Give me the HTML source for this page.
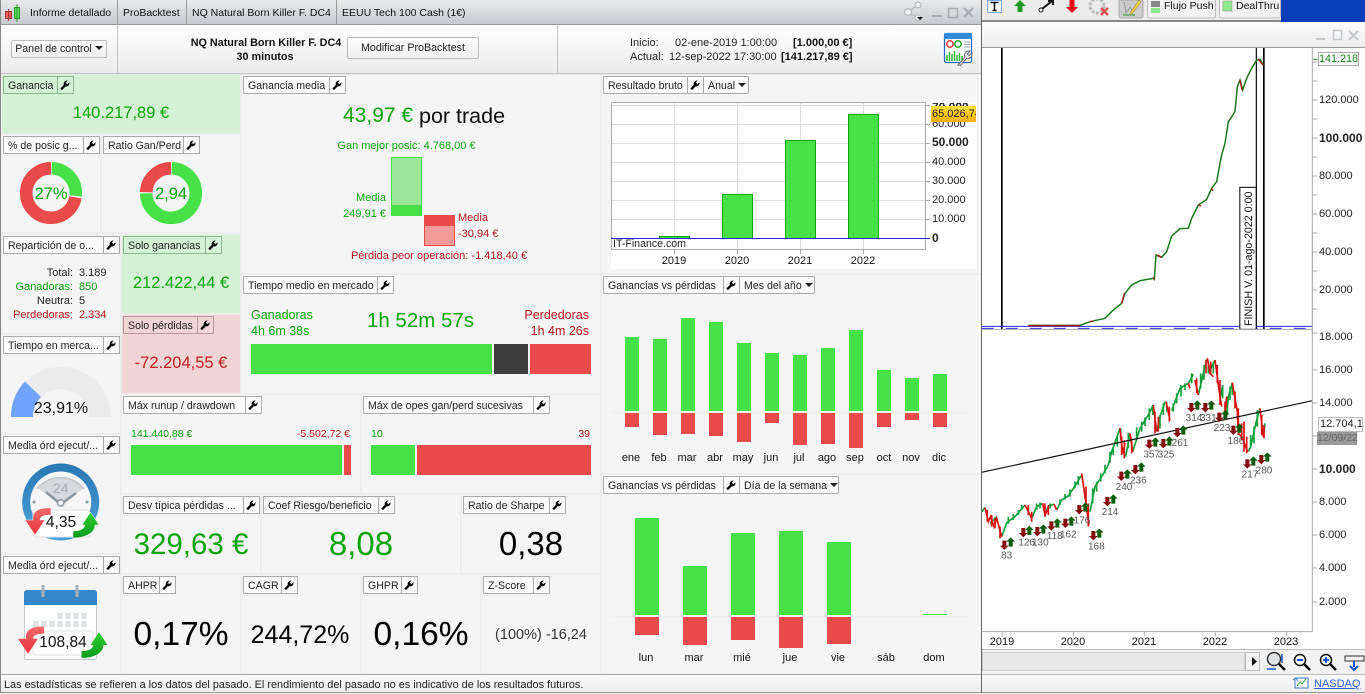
<!DOCTYPE html>
<html lang="es"><head><meta charset="utf-8"><title>Informe detallado</title>
<style>
html,body{margin:0;padding:0;width:1365px;height:694px;overflow:hidden;background:#ededed;font-family:"Liberation Sans",Arial,sans-serif;font-size:11px;color:#111}
.p{position:absolute;background:#f5f5f5}
.x{position:absolute;white-space:nowrap;line-height:16px}
.c{text-align:center}.rt{text-align:right}
.g{color:#0aa50a}.r{color:#b5161c}
.t{position:absolute;display:flex;height:18px;box-sizing:border-box;border:1px solid #aaa;background:#fafafa;font-size:10.6px;line-height:16px;color:#222;white-space:nowrap}
.t b{font-weight:normal;padding:1px 0 0 4px;border-right:1px solid #aaa;display:block;box-sizing:border-box;overflow:hidden}
.t i{display:block;width:15px;box-sizing:border-box}
.t i svg{display:block;margin:3px 0 0 2px;width:10px;height:10px}
.t u{text-decoration:none;display:block;border-left:1px solid #aaa;margin-left:0;padding:1px 0 0 4px;box-sizing:border-box}
.t u:after{content:"";display:inline-block;border:4px solid transparent;border-top-color:#222;border-bottom:0;margin-left:3px;vertical-align:2px}
.tg{background:transparent;border-color:#8fb58f}.tg b{border-color:#8fb58f}
.tr{background:transparent;border-color:#b59a9a}.tr b{border-color:#b59a9a}
.btn{position:absolute;box-sizing:border-box;border:1px solid #bbb;border-radius:2px;background:linear-gradient(#fdfdfd,#f0f0f0);text-align:center;color:#222}
.ax{position:absolute;left:1319px;line-height:14px;font-size:11px;color:#222;white-space:nowrap}
.yr{position:absolute;width:50px;text-align:center;font-size:11px;line-height:14px;color:#111}
.m{position:absolute;width:28px;text-align:center;font-size:11px;line-height:14px;color:#111}
.d{position:absolute;width:48px;text-align:center;font-size:11px;line-height:14px;color:#111}
.ya{position:absolute;left:932px;font-size:11px;line-height:14px;color:#222}
</style></head><body>

<!-- main window backgrounds -->
<div class="p" style="left:0;top:0;width:982px;height:25px;background:linear-gradient(#e9ebec,#c6cace);border-bottom:1px solid #999;box-sizing:border-box"></div>
<div class="p" style="left:0;top:25px;width:982px;height:49px;background:linear-gradient(#fff,#ececec);border-bottom:1px solid #c0c0c0;box-sizing:border-box"></div>
<div class="p" style="left:117px;top:0;width:1px;height:24px;background:#9a9a9a"></div>
<div class="p" style="left:186px;top:0;width:1px;height:24px;background:#9a9a9a"></div>
<div class="p" style="left:336px;top:0;width:1px;height:24px;background:#9a9a9a"></div>
<div class="p" style="left:117px;top:25px;width:1px;height:48px;background:#c4c4c4"></div>
<div class="p" style="left:557px;top:25px;width:1px;height:48px;background:#c4c4c4"></div>

<!-- panels -->
<div class="p" style="left:2px;top:75px;width:238px;height:58px;background:#d4f2d4"></div>
<div class="p" style="left:2px;top:135px;width:98px;height:97px"></div>
<div class="p" style="left:102px;top:135px;width:138px;height:97px"></div>
<div class="p" style="left:2px;top:235px;width:118px;height:98px"></div>
<div class="p" style="left:122px;top:235px;width:118px;height:78px;background:#d4f2d4"></div>
<div class="p" style="left:122px;top:315px;width:118px;height:78px;background:#f1d4d4"></div>
<div class="p" style="left:2px;top:335px;width:118px;height:98px"></div>
<div class="p" style="left:2px;top:435px;width:118px;height:118px"></div>
<div class="p" style="left:2px;top:555px;width:118px;height:118px"></div>
<div class="p" style="left:242px;top:75px;width:358px;height:198px"></div>
<div class="p" style="left:242px;top:275px;width:358px;height:118px"></div>
<div class="p" style="left:122px;top:395px;width:238px;height:98px"></div>
<div class="p" style="left:362px;top:395px;width:238px;height:98px"></div>
<div class="p" style="left:122px;top:495px;width:138px;height:78px"></div>
<div class="p" style="left:262px;top:495px;width:198px;height:78px"></div>
<div class="p" style="left:462px;top:495px;width:138px;height:78px"></div>
<div class="p" style="left:122px;top:575px;width:118px;height:98px"></div>
<div class="p" style="left:242px;top:575px;width:118px;height:98px"></div>
<div class="p" style="left:362px;top:575px;width:118px;height:98px"></div>
<div class="p" style="left:482px;top:575px;width:118px;height:98px"></div>
<div class="p" style="left:602px;top:75px;width:379px;height:198px"></div>
<div class="p" style="left:602px;top:275px;width:379px;height:198px"></div>
<div class="p" style="left:602px;top:475px;width:379px;height:198px"></div>
<div class="p" style="left:611px;top:102px;width:365px;height:167px;background:#fff"></div>

<!-- status bar -->
<div class="p" style="left:0;top:674px;width:982px;height:19px;background:linear-gradient(#fafafa,#ececec);border-top:1px solid #aaa;border-bottom:1px solid #999;box-sizing:border-box"></div>
<div class="x" style="left:4px;top:677px;color:#222;font-size:10.9px">Las estadísticas se refieren a los datos del pasado. El rendimiento del pasado no es indicativo de los resultados futuros.</div>

<!-- right window backgrounds -->
<div class="p" style="left:981px;top:0;width:384px;height:22px;background:#ececec;border-bottom:2px solid #888;box-sizing:border-box"></div>
<div class="p" style="left:1281px;top:0;width:84px;height:22px;background:#0a3eb8"></div>
<div class="p" style="left:981px;top:22px;width:384px;height:26px;background:linear-gradient(#fdfdfd,#ececec);border-bottom:1px solid #999;box-sizing:border-box"></div>
<div class="p" style="left:981px;top:48px;width:384px;height:601px;background:#fff"></div>
<div class="p" style="left:981px;top:649px;width:384px;height:26px;background:#f2f2f2;border-top:1px solid #bbb;border-bottom:1px solid #bbb;box-sizing:border-box"></div>
<div class="p" style="left:982px;top:652px;width:263px;height:19px;background:#e8e8e8;border:1px solid #ccc;box-sizing:border-box"></div>
<div class="p" style="left:1245px;top:652px;width:15px;height:19px;background:#f4f4f4;border:1px solid #bbb;box-sizing:border-box"></div>
<div class="p" style="left:981px;top:675px;width:384px;height:18px;background:linear-gradient(#fafafa,#eee);border-bottom:1px solid #999;box-sizing:border-box"></div>
<div class="p" style="left:981px;top:0;width:1px;height:693px;background:#666"></div>
<div class="p" style="left:0;top:0;width:1px;height:693px;background:#888"></div>

<!-- graphics layer -->
<svg width="1365" height="694" viewBox="0 0 1365 694" style="position:absolute;left:0;top:0" xmlns="http://www.w3.org/2000/svg">
<defs>
<path id="wr" d="M.6 8.2L3.800 5C3.200 3 4.600 .4 7.600 .5L5.800 2.600L7.400 4.200L9.500 2.300C9.800 5 7.800 6.800 5.700 6.200L2.400 9.700C1.600 10.200 .1 9 .6 8.200Z" fill="#000"/>
<path id="au" d="M0-15L13-2L6-2L6 13L-6 13L-6-2L-13-2Z" fill="#0a5c0a"/>
<path id="ad" d="M0 15L13 2L6 2L6-13L-6-13L-6 2L-13 2Z" fill="#860b0b"/>
<linearGradient id="ring" x1="0" y1="0" x2="0" y2="1"><stop offset="0" stop-color="#2a78b4"/><stop offset="1" stop-color="#4aa3df"/></linearGradient>
<linearGradient id="redA" x1="0" y1="0" x2="0" y2="1"><stop offset="0" stop-color="#f26a6a"/><stop offset="1" stop-color="#e8333a"/></linearGradient>
<linearGradient id="grnA" x1="0" y1="0" x2="0" y2="1"><stop offset="0" stop-color="#2fd02f"/><stop offset="1" stop-color="#0d9a1e"/></linearGradient>
</defs>

<!-- tab candle icon -->
<rect x="5.500" y="11.500" width="6" height="7" fill="#ee6060" stroke="#a33"/><path d="M8.500 9v12" stroke="#a33"/>
<rect x="14.500" y="7.500" width="5" height="11" fill="#5be05b" stroke="#2a9a2a"/><path d="M17 4v18" stroke="#2a9a2a"/>

<!-- share and window buttons -->
<g stroke="#b4b8bc" stroke-width="1.200" fill="#f3f3f3"><path d="M918 5L908 12L918 18" fill="none"/><circle cx="908" cy="12" r="3.400"/><circle cx="918" cy="5" r="3"/><circle cx="918" cy="18" r="3"/></g>
<path d="M917 17h6l-3 3z" fill="#111"/>
<path d="M932 16h10" stroke="#a8acb0" stroke-width="2"/><rect x="948.500" y="8.500" width="9" height="9" fill="none" stroke="#a8acb0" stroke-width="1.500"/><path d="M964 8l9 9M973 8l-9 9" stroke="#a8acb0" stroke-width="2"/>

<!-- right-top report icon -->
<rect x="944.500" y="33.500" width="27" height="29" rx="2" fill="#fff" stroke="#1a6cc0" stroke-width="1.200"/><rect x="944" y="33" width="28" height="6" rx="1" fill="#2f8bd8"/>
<circle cx="950" cy="44" r="3.200" fill="none" stroke="#d33" stroke-width="1.500"/><circle cx="958" cy="44" r="3.200" fill="none" stroke="#2a2" stroke-width="1.500"/><path d="M964 42h6M964 44.500h6M964 47h6" stroke="#9ab" stroke-width="1"/>
<path d="M947 61v-6M949.500 61v-9M952 61v-7M954.500 61v-10M957 61v-6M959.500 61v-8M962 61v-5" stroke="#2bb52b" stroke-width="1.500"/>
<path d="M958 65l7-8c-1.500-3 1-7 5-6l-2.500 3 1.500 1.500 3-2.500c.5 4-3 6.500-5.500 5.500l-6 7z" fill="#eee" stroke="#667"/>

<!-- donuts -->
<g fill="none" stroke-width="12.500">
<circle cx="51" cy="193" r="24.800" stroke="#e94a4a" stroke-dasharray="112.600 44.200" stroke-dashoffset="-43.200" transform="rotate(-90 51 193)"/>
<circle cx="51" cy="193" r="24.800" stroke="#47e047" stroke-dasharray="41 115.800" stroke-dashoffset="-.8" transform="rotate(-90 51 193)"/>
<circle cx="171" cy="193" r="24.800" stroke="#47e047" stroke-dasharray="115.600 41.200" stroke-dashoffset="-.8" transform="rotate(-90 171 193)"/>
<circle cx="171" cy="193" r="24.800" stroke="#e94a4a" stroke-dasharray="38.700 118.100" stroke-dashoffset="-117.500" transform="rotate(-90 171 193)"/>
</g>

<!-- gauge -->
<path d="M11 417A50 50 0 0 1 111 417L89 417A28 28 0 0 0 33 417Z" fill="#ececec"/>
<path d="M11 417A50 50 0 0 1 25 381.500L41 397A28 28 0 0 0 33 417Z" fill="#6fa3ff"/>

<!-- clock -->
<circle cx="60.700" cy="502" r="38.500" fill="url(#ring)"/><circle cx="60.700" cy="502" r="30.500" fill="#f6f6f6"/>
<path d="M38 488A30 30 0 0 1 84 488L68 500H54Z" fill="#d5dadd"/>
<path d="M37 489A30 30 0 0 1 84 489" fill="none" stroke="#bfc5c9" stroke-width="1.500"/>
<text x="60.700" y="493" text-anchor="middle" font-family="Liberation Sans" font-size="14" fill="#a4adb3">24</text>
<path d="M46 492L58 502M76 493L64 502" stroke="#8a969e" stroke-width="2.500"/><circle cx="60.700" cy="503" r="3.200" fill="#fff" stroke="#8a969e" stroke-width="1.500"/>
<circle cx="34" cy="502" r="1.500" fill="#8a969e"/><circle cx="87" cy="502" r="1.500" fill="#8a969e"/>
<rect x="33" y="510" width="57" height="27" rx="3" fill="#fff" stroke="#ddd"/>
<path d="M51 508C38 507 32 512 33 520L25 520L35 535L45 520L40 520C40 516 45 515 51 515Z" fill="url(#redA)" stroke="#fff" stroke-width=".5"/>
<path d="M73 531C80 531 84 529 85 525L82 525L90.500 512L99 525L95 525C95 533 85 538 73 538Z" fill="url(#grnA)" stroke="#fff" stroke-width=".5"/>

<!-- calendar -->
<rect x="24.500" y="590.500" width="72" height="69" rx="2" fill="#fff" stroke="#c2c8cc"/>
<path d="M24 605v-12a3 3 0 0 1 3-3h67a3 3 0 0 1 3 3v12z" fill="#3288c8"/>
<path d="M43 585v12M77 585v12" stroke="#a9b2b8" stroke-width="3"/>
<path d="M57.500 613h5v6h-5zM65.500 613h5v6h-5zM73.500 613h5v6h-5zM81.500 613h5v6h-5zM33.500 621h5v6h-5zM41.500 621h5v6h-5zM49.500 621h5v6h-5zM57.500 621h5v6h-5zM65.500 621h5v6h-5zM73.500 621h5v6h-5zM81.500 621h5v6h-5z" fill="#dce1e4"/>
<rect x="33" y="631" width="60" height="24" rx="3" fill="#fff" stroke="#ddd"/>
<g transform="translate(-7 118.700)"><path d="M51 508C38 507 32 512 33 520L25 520L35 535L45 520L40 520C40 516 45 515 51 515Z" fill="url(#redA)"/></g>
<g transform="translate(8.500 120)"><path d="M73 531C80 531 84 529 85 525L82 525L90.500 512L99 525L95 525C95 533 85 538 73 538Z" fill="url(#grnA)"/></g>

<!-- ganancia media bars -->
<rect x="391.500" y="157.500" width="30" height="58" fill="#9be89b" stroke="#4ce04c"/><rect x="391" y="205" width="31" height="11" fill="#47e047"/>
<rect x="424.500" y="215.500" width="30" height="30" fill="#f09a9a" stroke="#e94a4a"/><rect x="424" y="215" width="31" height="11" fill="#e94a4a"/>

<!-- resultado bruto chart -->
<g stroke="#dcdcdc" fill="none"><path d="M612 105.500H925M612 124.500H925M612 143.500H925M612 162.500H925M612 181.500H925M612 200.500H925M612 219.500H925M674.500 103V249M737.500 103V249M800.500 103V249M863.500 103V249"/></g>
<rect x="611.500" y="102.500" width="314" height="147" fill="none" stroke="#aaa"/>
<g fill="#47e047" stroke="#0aa50a"><rect x="659.500" y="236.500" width="30" height="2"/><rect x="722.500" y="194.500" width="30" height="44"/><rect x="785.500" y="140.500" width="30" height="98"/><rect x="848.500" y="114.500" width="30" height="124"/></g>
<path d="M611 238.500H930" stroke="#2424dd"/>
<path d="M926 105.500h4M926 124.500h4M926 143.500h4M926 162.500h4M926 181.500h4M926 200.500h4M926 219.500h4M674.500 250v4M737.500 250v4M800.500 250v4M863.500 250v4" stroke="#aaa"/>

<!-- tiempo / runup / opes bars -->
<rect x="251" y="344" width="241" height="30" fill="#47e047"/><rect x="494" y="344" width="34" height="30" fill="#3c3c3c"/><rect x="530" y="344" width="61" height="30" fill="#e94a4a"/>
<rect x="131" y="445" width="211" height="30" fill="#47e047"/><rect x="344" y="445" width="7" height="30" fill="#e94a4a"/>
<rect x="371" y="445" width="44" height="30" fill="#47e047"/><rect x="417" y="445" width="174" height="30" fill="#e94a4a"/>

<!-- months bars -->
<path d="M612 412.500H970M612 616.500H970" stroke="#eeeeee"/>
<g fill="#47e047"><rect x="625" y="337" width="14" height="74"/><rect x="653" y="339" width="14" height="72"/><rect x="681" y="318" width="14" height="93"/><rect x="709" y="322" width="14" height="89"/><rect x="737" y="343" width="14" height="68"/><rect x="765" y="353" width="14" height="58"/><rect x="793" y="355" width="14" height="56"/><rect x="821" y="348" width="14" height="63"/><rect x="849" y="330" width="14" height="81"/><rect x="877" y="370" width="14" height="41"/><rect x="905" y="378" width="14" height="33"/><rect x="933" y="374" width="14" height="37"/></g>
<g fill="#e94a4a"><rect x="625" y="413" width="14" height="14"/><rect x="653" y="413" width="14" height="22"/><rect x="681" y="413" width="14" height="21"/><rect x="709" y="413" width="14" height="23"/><rect x="737" y="413" width="14" height="29"/><rect x="765" y="413" width="14" height="10"/><rect x="793" y="413" width="14" height="32"/><rect x="821" y="413" width="14" height="31"/><rect x="849" y="413" width="14" height="35"/><rect x="877" y="413" width="14" height="14"/><rect x="905" y="413" width="14" height="7"/><rect x="933" y="413" width="14" height="14"/></g>

<!-- days bars -->
<g fill="#47e047"><rect x="635" y="518" width="24" height="97"/><rect x="683" y="566" width="24" height="49"/><rect x="731" y="533" width="24" height="82"/><rect x="779" y="531" width="24" height="84"/><rect x="827" y="542" width="24" height="73"/><rect x="923" y="614" width="24" height="1"/></g>
<g fill="#e94a4a"><rect x="635" y="617" width="24" height="18"/><rect x="683" y="617" width="24" height="28"/><rect x="731" y="617" width="24" height="23"/><rect x="779" y="617" width="24" height="31"/><rect x="827" y="617" width="24" height="27"/></g>

<!-- right window buttons -->
<path d="M1316 39h9" stroke="#c4c8cc" stroke-width="2"/><rect x="1333.500" y="30.500" width="8" height="9" fill="none" stroke="#c4c8cc" stroke-width="1.500"/><path d="M1349 31l9 9M1358 31l-9 9" stroke="#c4c8cc" stroke-width="2"/>

<!-- toolbar icons -->
<rect x="987.500" y=".5" width="14" height="12" fill="#fff" stroke="#7aa7e8"/><path d="M990.500 2.500h8M994.500 2.500v8M992.500 10.500h4" stroke="#111" stroke-width="1.600" fill="none"/>
<path d="M1020 0l6 6h-3.500v6h-5V6H1014z" fill="#1f9a1f"/>
<path d="M1042 9L1052 1M1048 1h5v4" stroke="#111" stroke-width="2" fill="none"/><circle cx="1041" cy="10" r="2" fill="#fff" stroke="#111"/>
<path d="M1072 13l6-6h-3.500V0h-5v7H1066z" fill="#e01010"/>
<circle cx="1097" cy="6" r="7" fill="none" stroke="#bbb" stroke-width="3" stroke-dasharray="3 1.500"/><path d="M1101 8l7 7M1108 8l-7 7" stroke="#e05050" stroke-width="2.500"/>
<rect x="1119" y="0" width="24" height="18" rx="2" fill="#ccc" stroke="#aaa"/><path d="M1124 2l2 11 4-6 3 5" fill="none" stroke="#999"/><path d="M1130 13l9-13 2 2-9 12z" fill="#f0d040" stroke="#8a7a20" stroke-width=".5"/><path d="M1123 15h12" stroke="#2a9a2a"/>
<rect x="1147.500" y="-1" width="68" height="19" rx="2" fill="#f2f2f2" stroke="#bbb"/><rect x="1151" y="1" width="9" height="6" fill="#888"/><rect x="1151" y="8" width="9" height="5" fill="#8ee88e"/>
<rect x="1219.500" y="-1" width="61" height="19" rx="2" fill="#f2f2f2" stroke="#bbb"/><rect x="1223" y="1" width="9" height="10" fill="#8ee88e" stroke="#888" stroke-width=".5"/>

<!-- right chart elements (scaled from 3x coordinates) -->
<g transform="translate(980 0) scale(.33333)">
 <g stroke="#000" fill="none"><path d="M65.500 144V988" stroke-width="5"/><path d="M829 144V988" stroke-width="3.500"/><path d="M851.500 144V988" stroke-width="5"/></g>
 <path d="M5 979H997" stroke="#2424dd" stroke-width="3"/>
 <path d="M5 985H997" stroke="#2424dd" stroke-width="3" stroke-dasharray="36 36"/>
 <path d="M145 976H300L330 965L375 955L400 930L425 910L435 880L455 855L480 842L520 835L523 838L528 765L545 772L560 755L575 708L600 686L625 685L635 655L655 615L680 598L695 565L710 545L720 490L725 465L735 430L745 365L765 335L772 260L780 240L788 270L800 235L815 205L830 180L840 178L850 195" fill="none" stroke="#197a19" stroke-width="4.500"/>
 <path d="M145 977H300M330 965l10-2M425 910l8-30M520 832l2 6M532 765l12 7M655 615l8 3M695 565l4 8M780 240l6 30M835 178l14 17" fill="none" stroke="#a51515" stroke-width="4"/>
 <rect x="779.500" y="562" width="49" height="426" fill="#fff" stroke="#000" stroke-width="3"/>
 <path d="M5 988H997" stroke="#aaa" stroke-width="3"/>
 <path d="M997 144V1005" stroke="#aaa" stroke-width="3"/>
 <path d="M997 186h15M997 243h15M997 300h15M997 357h15M997 414h15M997 471h15M997 528h15M997 585h15M997 642h15M997 699h15M997 756h15M997 813h15M997 870h15M997 927h15M997 999h15" stroke="#aaa" stroke-width="3"/>
 <path d="M1000 178h12" stroke="#197a19" stroke-width="3"/>
</g>
<text transform="translate(1252 326) rotate(-90)" font-family="Liberation Sans" font-size="10.700" fill="#111">FINISH V. 01-ago-2022 0:00</text>

<g transform="translate(980 340) scale(.33333)">
 <path d="M5 515L15 503M30 550L50 530M65 590L80 548L105 530L135 495M155 535L170 500L188 490M197 520L205 500L222 492M230 510L245 480L265 468L290 430L305 405M330 515L345 440L365 410L385 375L395 335L420 265M437 350L450 280M458 335L480 265L505 225L520 195M530 275L540 230L555 185M575 212L600 145L625 130L640 103M655 165L670 100L682 55M690 90L705 60M722 170L728 135M740 225L745 170L757 128M805 335L812 320L830 240L840 205M850 290L855 250" fill="none" stroke="#0fa03c" stroke-width="5"/>
 <path d="M85 552V530M100 540V522M115 525V510M125 510V495M170 510V490M180 505V488M210 505V490M240 495V478M255 478V462M270 470V448M285 445V425M295 435V408M338 490V445M350 455V425M362 425V400M375 400V375M390 368V335M400 345V325M412 320V285M422 300V265M445 325V278M470 295V262M485 275V245M495 258V232M508 240V205M518 225V195M540 265V225M550 225V190M560 215V185M580 215V190M590 190V160M603 170V135M615 150V130M635 130V100M662 145V100M672 120V75M685 100V65M700 100V65M728 175V135M742 225V170M750 180V140M757 165V128M812 325V285M822 310V260M832 260V210" fill="none" stroke="#0fa03c" stroke-width="5"/>
 <path d="M15 503L25 545L32 530L42 560L50 535L65 590M135 495L155 535M188 490L195 525L205 505M222 492L230 510M305 400L315 470L327 555M420 265L428 340L435 310M450 280L458 335M520 195L530 275M558 185L570 240M625 130L630 145M645 120L655 165M682 55L690 100L700 110M705 60L720 170L725 200M740 170L735 230M757 128L772 215L775 280L785 290L803 335M840 205L850 290" fill="none" stroke="#d81010" stroke-width="5"/>
 <path d="M22 545V510M35 560V525M45 565V535M60 595V560M145 525V495M155 545V515M195 530V490M205 525V495M318 510V440M325 560V490M425 345V290M433 355V300M455 340V295M525 280V215M535 275V230M568 245V200M650 160V115M678 100V60M692 105V65M712 130V75M720 195V120M735 235V185M765 205V155M775 285V205M785 300V250M792 335V245M800 340V290M845 285V225M852 295V255" fill="none" stroke="#d81010" stroke-width="5"/>
 <path d="M5 397L997 182" stroke="#111" stroke-width="3.500"/>
 <g>
 <use href="#ad" x="73" y="615"/><use href="#au" x="92" y="607"/><use href="#ad" x="130" y="577"/><use href="#au" x="148" y="572"/><use href="#ad" x="172" y="574"/><use href="#au" x="190" y="568"/><use href="#ad" x="214" y="557"/><use href="#au" x="232" y="550"/><use href="#ad" x="256" y="549"/><use href="#au" x="274" y="544"/><use href="#ad" x="298" y="508"/><use href="#au" x="316" y="502"/><use href="#ad" x="340" y="586"/><use href="#au" x="358" y="580"/><use href="#ad" x="382" y="484"/><use href="#au" x="400" y="478"/><use href="#ad" x="424" y="408"/><use href="#au" x="442" y="403"/><use href="#ad" x="466" y="388"/><use href="#au" x="484" y="382"/><use href="#ad" x="508" y="312"/><use href="#au" x="526" y="307"/><use href="#ad" x="550" y="310"/><use href="#au" x="568" y="304"/><use href="#ad" x="592" y="277"/><use href="#au" x="610" y="271"/><use href="#ad" x="634" y="202"/><use href="#au" x="652" y="196"/><use href="#ad" x="676" y="202"/><use href="#au" x="694" y="196"/><use href="#ad" x="718" y="231"/><use href="#au" x="736" y="225"/><use href="#ad" x="760" y="270"/><use href="#au" x="778" y="265"/><use href="#ad" x="802" y="371"/><use href="#au" x="820" y="364"/><use href="#ad" x="844" y="358"/><use href="#au" x="862" y="352"/>
 </g>
 <g font-family="Liberation Sans" font-size="30" fill="#555" text-anchor="middle">
 <text x="80" y="655">83</text><text x="140" y="617">126</text><text x="181" y="617">130</text><text x="224" y="597">118</text><text x="265" y="592">162</text><text x="306" y="550">176</text><text x="349" y="628">168</text><text x="390" y="525">214</text><text x="432" y="450">240</text><text x="475" y="430">236</text><text x="515" y="353">357</text><text x="558" y="353">325</text><text x="600" y="318">261</text><text x="642" y="243">314</text><text x="685" y="243">331</text><text x="726" y="273">223</text><text x="768" y="312">186</text><text x="810" y="412">217</text><text x="852" y="400">280</text>
 </g>
 <path d="M5 875H997M997 -340V875" stroke="#aaa" stroke-width="3" fill="none"/>
 <path d="M67 875v14M280 875v14M493 875v14M706 875v14M919 875v14" stroke="#aaa" stroke-width="3"/>
 <path d="M997 90h15M997 189h15M997 288h15M997 387h15M997 486h15M997 585h15M997 684h15M997 786h15" stroke="#aaa" stroke-width="3"/>
</g>

<!-- bottom right controls -->
<path d="M1252 657l5 4.500-5 4.500z" fill="#111"/>
<circle cx="1274" cy="659" r="6.500" fill="#dfe3e6" stroke="#333" stroke-width="1.500"/><path d="M1279 664l6 6" stroke="#111" stroke-width="2.500"/><path d="M1267 669h9M1282 654v9" stroke="#1450d8" stroke-width="1.500"/>
<circle cx="1300" cy="660" r="5.500" fill="#fff" stroke="#111" stroke-width="1.500"/><path d="M1297 660h6" stroke="#1450d8" stroke-width="2"/><path d="M1304 664l6 6" stroke="#111" stroke-width="2.500"/>
<circle cx="1326" cy="660" r="5.500" fill="#fff" stroke="#111" stroke-width="1.500"/><path d="M1323 660h6M1326 657v6" stroke="#1450d8" stroke-width="2"/><path d="M1330 664l6 6" stroke="#111" stroke-width="2.500"/>
<rect x="1345" y="656" width="19" height="5" fill="#eee" stroke="#333"/><path d="M1354 661v6M1350 666l4 4 4-4" stroke="#1450d8" stroke-width="2" fill="none"/>
<rect x="1295" y="678" width="13" height="10" fill="#fff" stroke="#3878c8"/><path d="M1297 686l3-4 2 2 4-5" stroke="#2a9a2a" fill="none"/><path d="M1293 680l3-2 2 3" stroke="#3878c8" fill="none"/>
</svg>

<!-- tabs text -->
<div class="x" style="left:30px;top:5px;font-size:10.500px">Informe detallado</div>
<div class="x" style="left:123px;top:5px;font-size:10.500px">ProBacktest</div>
<div class="x" style="left:192px;top:5px;font-size:10.500px">NQ Natural Born Killer F. DC4</div>
<div class="x" style="left:342px;top:5px;font-size:10.500px">EEUU Tech 100 Cash (1€)</div>

<!-- header -->
<div class="btn" style="left:11px;top:40px;width:96px;height:18px;line-height:17px;font-size:10.600px">Panel de control<span style="display:inline-block;border:4px solid transparent;border-top-color:#222;border-bottom:0;margin-left:3px;vertical-align:2px"></span></div>
<div class="x c" style="left:181px;top:35px;width:170px;font-weight:bold;font-size:10.800px">NQ Natural Born Killer F. DC4</div>
<div class="x c" style="left:180px;top:49px;width:170px;font-weight:bold;font-size:10.800px">30 minutos</div>
<div class="btn" style="left:347px;top:37px;width:132px;height:22px;line-height:20px;font-size:10.700px">Modificar ProBacktest</div>
<div class="x" style="left:630px;top:35px;color:#222">Inicio:</div>
<div class="x" style="left:675px;top:35px;color:#222">02-ene-2019 1:00:00</div>
<div class="x" style="left:793px;top:35px;font-weight:bold">[1.000,00 €]</div>
<div class="x" style="left:630px;top:49px;color:#222">Actual:</div>
<div class="x" style="left:669px;top:49px;color:#222">12-sep-2022 17:30:00</div>
<div class="x" style="left:781px;top:49px;font-weight:bold">[141.217,89 €]</div>

<!-- tags -->
<div class="t tg" style="left:3px;top:76px"><b style="width:54px">Ganancia</b><i><svg viewBox="0 0 10 10"><use href="#wr"/></svg></i></div>
<div class="t" style="left:3px;top:136px"><b style="width:80px">% de posic g...</b><i><svg viewBox="0 0 10 10"><use href="#wr"/></svg></i></div>
<div class="t" style="left:103px;top:136px"><b style="width:80px">Ratio Gan/Perd</b><i><svg viewBox="0 0 10 10"><use href="#wr"/></svg></i></div>
<div class="t" style="left:3px;top:236px"><b style="width:100px">Repartición de o...</b><i><svg viewBox="0 0 10 10"><use href="#wr"/></svg></i></div>
<div class="t tg" style="left:123px;top:236px"><b style="width:82px">Solo ganancias</b><i><svg viewBox="0 0 10 10"><use href="#wr"/></svg></i></div>
<div class="t tr" style="left:123px;top:316px"><b style="width:74px">Solo pérdidas</b><i><svg viewBox="0 0 10 10"><use href="#wr"/></svg></i></div>
<div class="t" style="left:3px;top:336px"><b style="width:100px">Tiempo en merca...</b><i><svg viewBox="0 0 10 10"><use href="#wr"/></svg></i></div>
<div class="t" style="left:3px;top:436px"><b style="width:100px">Media órd ejecut/...</b><i><svg viewBox="0 0 10 10"><use href="#wr"/></svg></i></div>
<div class="t" style="left:3px;top:556px"><b style="width:100px">Media órd ejecut/...</b><i><svg viewBox="0 0 10 10"><use href="#wr"/></svg></i></div>
<div class="t" style="left:243px;top:76px"><b style="width:86px">Ganancia media</b><i><svg viewBox="0 0 10 10"><use href="#wr"/></svg></i></div>
<div class="t" style="left:243px;top:276px"><b style="width:134px">Tiempo medio en mercado</b><i><svg viewBox="0 0 10 10"><use href="#wr"/></svg></i></div>
<div class="t" style="left:123px;top:396px"><b style="width:122px">Máx runup / drawdown</b><i><svg viewBox="0 0 10 10"><use href="#wr"/></svg></i></div>
<div class="t" style="left:363px;top:396px"><b style="width:170px">Máx de opes gan/perd sucesivas</b><i><svg viewBox="0 0 10 10"><use href="#wr"/></svg></i></div>
<div class="t" style="left:123px;top:496px"><b style="width:120px">Desv típica pérdidas ...</b><i><svg viewBox="0 0 10 10"><use href="#wr"/></svg></i></div>
<div class="t" style="left:263px;top:496px"><b style="width:115px">Coef Riesgo/beneficio</b><i><svg viewBox="0 0 10 10"><use href="#wr"/></svg></i></div>
<div class="t" style="left:463px;top:496px"><b style="width:86px">Ratio de Sharpe</b><i><svg viewBox="0 0 10 10"><use href="#wr"/></svg></i></div>
<div class="t" style="left:123px;top:576px"><b style="width:36px">AHPR</b><i><svg viewBox="0 0 10 10"><use href="#wr"/></svg></i></div>
<div class="t" style="left:243px;top:576px"><b style="width:38px">CAGR</b><i><svg viewBox="0 0 10 10"><use href="#wr"/></svg></i></div>
<div class="t" style="left:363px;top:576px"><b style="width:38px">GHPR</b><i><svg viewBox="0 0 10 10"><use href="#wr"/></svg></i></div>
<div class="t" style="left:483px;top:576px"><b style="width:50px">Z-Score</b><i><svg viewBox="0 0 10 10"><use href="#wr"/></svg></i></div>
<div class="t" style="left:603px;top:76px;border-radius:0 2px 2px 0"><b style="width:84px">Resultado bruto</b><i><svg viewBox="0 0 10 10"><use href="#wr"/></svg></i><u style="width:45px">Anual</u></div>
<div class="t" style="left:603px;top:276px;border-radius:0 2px 2px 0"><b style="width:120px">Ganancias vs pérdidas</b><i><svg viewBox="0 0 10 10"><use href="#wr"/></svg></i><u style="width:75px">Mes del año</u></div>
<div class="t" style="left:603px;top:476px;border-radius:0 2px 2px 0"><b style="width:120px">Ganancias vs pérdidas</b><i><svg viewBox="0 0 10 10"><use href="#wr"/></svg></i><u style="width:99px">Día de la semana</u></div>

<!-- values -->
<div class="x c g" style="left:2px;top:103px;width:238px;font-size:16.500px;line-height:20px">140.217,89 €</div>
<div class="x c g" style="left:2px;top:184px;width:98px;font-size:16.500px;line-height:20px">27%</div>
<div class="x c g" style="left:122px;top:184px;width:98px;font-size:16.500px;line-height:20px">2,94</div>

<div class="x rt" style="left:2px;top:265px;width:71px;color:#222">Total:</div><div class="x" style="left:79px;top:265px;color:#222">3.189</div>
<div class="x rt g" style="left:2px;top:279px;width:71px">Ganadoras:</div><div class="x g" style="left:79px;top:279px">850</div>
<div class="x rt" style="left:2px;top:293px;width:71px;color:#222">Neutra:</div><div class="x" style="left:79px;top:293px;color:#222">5</div>
<div class="x rt r" style="left:2px;top:307px;width:71px">Perdedoras:</div><div class="x r" style="left:79px;top:307px">2.334</div>

<div class="x c g" style="left:122px;top:273px;width:118px;font-size:16.500px;line-height:20px">212.422,44 €</div>
<div class="x c" style="left:122px;top:353px;width:118px;font-size:16.500px;line-height:20px;color:#c02024">-72.204,55 €</div>
<div class="x c" style="left:10px;top:399px;width:102px;font-size:16px;line-height:20px;color:#111">23,91%</div>
<div class="x c" style="left:36px;top:513px;width:50px;font-size:15.500px;line-height:20px;color:#111">4,35</div>
<div class="x c" style="left:36px;top:633px;width:54px;font-size:15.500px;line-height:20px;color:#111">108,84</div>

<div class="x g" style="left:343px;top:101px;font-size:21px;line-height:30px">43,97 €</div>
<div class="x" style="left:419px;top:101px;font-size:21.500px;line-height:30px;color:#111">por trade</div>
<div class="x c g" style="left:306.500px;top:138px;width:200px">Gan mejor posic: 4.768,00 €</div>
<div class="x rt g" style="left:300px;top:190px;width:86px">Media</div>
<div class="x rt g" style="left:300px;top:206px;width:86px">249,91 €</div>
<div class="x r" style="left:458px;top:210px">Media</div>
<div class="x r" style="left:458px;top:226px">-30,94 €</div>
<div class="x c r" style="left:339px;top:248px;width:200px">Pérdida peor operación: -1.418,40 €</div>

<div class="x g" style="left:251px;top:307px;font-size:12.500px">Ganadoras</div>
<div class="x g" style="left:251px;top:323px;font-size:12.500px">4h 6m 38s</div>
<div class="x c g" style="left:340px;top:309px;width:161px;font-size:20.500px;line-height:24px">1h 52m 57s</div>
<div class="x rt r" style="left:489px;top:307px;width:100px;font-size:12.500px">Perdedoras</div>
<div class="x rt r" style="left:489px;top:323px;width:100px;font-size:12.500px">1h 4m 26s</div>

<div class="x g" style="left:131px;top:426px;font-size:10.500px">141.440,88 €</div>
<div class="x rt r" style="left:250px;top:426px;width:100px;font-size:10.500px">-5.502,72 €</div>
<div class="x g" style="left:371px;top:426px;font-size:10.500px">10</div>
<div class="x rt r" style="left:490px;top:426px;width:100px;font-size:10.500px">39</div>

<div class="x c g" style="left:122px;top:525px;width:138px;font-size:29.500px;line-height:40px">329,63 €</div>
<div class="x c g" style="left:262px;top:524px;width:198px;font-size:33px;line-height:40px">8,08</div>
<div class="x c" style="left:462px;top:524px;width:138px;font-size:33px;line-height:40px;color:#000">0,38</div>
<div class="x c" style="left:122px;top:615px;width:118px;font-size:33.500px;line-height:40px;color:#000">0,17%</div>
<div class="x c" style="left:242px;top:615px;width:116px;font-size:25px;line-height:40px;color:#000">244,72%</div>
<div class="x c" style="left:362px;top:615px;width:118px;font-size:33.500px;line-height:40px;color:#000">0,16%</div>
<div class="x c" style="left:482px;top:623px;width:118px;font-size:14.500px;line-height:24px;color:#333">(100%) -16,24</div>

<!-- resultado bruto labels -->
<div class="ya" style="top:103px;height:3px;overflow:hidden;font-weight:bold;font-size:12px;line-height:9px">70.000</div>
<div class="ya" style="top:117px">60.000</div>
<div class="ya" style="top:135px;font-weight:bold;font-size:12px">50.000</div>
<div class="ya" style="top:155px">40.000</div>
<div class="ya" style="top:174px">30.000</div>
<div class="ya" style="top:193px">20.000</div>
<div class="ya" style="top:212px">10.000</div>
<div class="ya" style="top:231px;font-weight:bold;font-size:12px">0</div>
<div class="x" style="left:931px;top:106px;width:45px;height:16px;background:linear-gradient(#ffe23a,#f2ae00);font-size:11px;line-height:16px;overflow:hidden;color:#222;padding-left:1px;box-sizing:border-box">65.026,74</div>
<div class="x" style="left:613px;top:237px;font-size:10.600px;line-height:14px;color:#222">IT-Finance.com</div>
<div class="yr" style="left:649px;top:254px">2019</div>
<div class="yr" style="left:712px;top:254px">2020</div>
<div class="yr" style="left:775px;top:254px">2021</div>
<div class="yr" style="left:838px;top:254px">2022</div>

<!-- month labels -->
<div class="m" style="left:617px;top:451px">ene</div><div class="m" style="left:645px;top:451px">feb</div><div class="m" style="left:673px;top:451px">mar</div><div class="m" style="left:701px;top:451px">abr</div><div class="m" style="left:729px;top:451px">may</div><div class="m" style="left:757px;top:451px">jun</div><div class="m" style="left:785px;top:451px">jul</div><div class="m" style="left:813px;top:451px">ago</div><div class="m" style="left:841px;top:451px">sep</div><div class="m" style="left:870px;top:451px">oct</div><div class="m" style="left:897px;top:451px">nov</div><div class="m" style="left:925px;top:451px">dic</div>
<div class="d" style="left:622px;top:651px">lun</div><div class="d" style="left:670px;top:651px">mar</div><div class="d" style="left:718px;top:651px">mié</div><div class="d" style="left:766px;top:651px">jue</div><div class="d" style="left:814px;top:651px">vie</div><div class="d" style="left:862px;top:651px">sáb</div><div class="d" style="left:910px;top:651px">dom</div>

<!-- toolbar text -->
<div class="x" style="left:1164px;top:0;font-size:10.500px;line-height:13px;color:#111">Flujo Push</div>
<div class="x" style="left:1236px;top:0;font-size:10.500px;line-height:13px;color:#111;width:44px;overflow:hidden">DealThru</div>

<!-- right axis -->
<div class="x" style="left:1318px;top:52px;width:41px;height:14px;box-sizing:border-box;border:1px solid #aaa;background:#fff;color:#197a19;line-height:12px;font-size:10.800px;text-align:center">141.218</div>
<div class="ax" style="top:93px">120.000</div>
<div class="ax" style="top:131px;font-weight:bold;font-size:12px">100.000</div>
<div class="ax" style="top:169px">80.000</div>
<div class="ax" style="top:207px">60.000</div>
<div class="ax" style="top:245px">40.000</div>
<div class="ax" style="top:283px">20.000</div>
<div class="ax" style="top:330px">18.000</div>
<div class="ax" style="top:363px">16.000</div>
<div class="ax" style="top:396px">14.000</div>
<div class="x" style="left:1318px;top:417px;width:45px;height:15px;box-sizing:border-box;border:1px solid #bbb;background:#fff;line-height:13px;font-size:11px;color:#222;overflow:hidden;padding-left:1px">12.704,1</div>
<div class="x" style="left:1317px;top:432px;width:40px;height:13px;background:#999;color:#666;line-height:13px;font-size:10.500px;text-align:center">12/09/22</div>
<div class="ax" style="top:462px;font-weight:bold;font-size:12px">10.000</div>
<div class="ax" style="top:495px">8.000</div>
<div class="ax" style="top:528px">6.000</div>
<div class="ax" style="top:561px">4.000</div>
<div class="ax" style="top:595px">2.000</div>
<div class="yr" style="left:977px;top:635px">2019</div>
<div class="yr" style="left:1048px;top:635px">2020</div>
<div class="yr" style="left:1119px;top:635px">2021</div>
<div class="yr" style="left:1190px;top:635px">2022</div>
<div class="yr" style="left:1261px;top:635px">2023</div>
<div class="x" style="left:1314px;top:676px;color:#2a5fd8;text-decoration:underline;font-size:11px">NASDAQ</div>
</body></html>
